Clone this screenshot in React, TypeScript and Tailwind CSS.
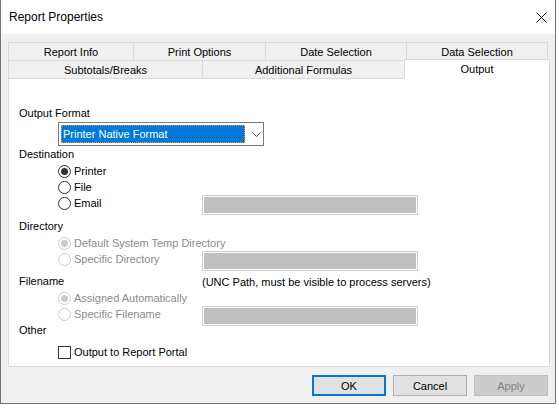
import React from 'react';

// Tab captions, two rows as the dialog lays them out
const backTabs = [
  { label: 'Report Info', w: 'w-[125px]' },
  { label: 'Print Options', w: 'w-[132px]' },
  { label: 'Date Selection', w: 'w-[141px]' },
  { label: 'Data Selection', w: 'w-[142px]' },
];

const Radio = ({ checked = false, disabled = false }: { checked?: boolean; disabled?: boolean }) => (
  <span
    className={
      'flex h-[13px] w-[13px] shrink-0 items-center justify-center rounded-full border bg-white ' +
      (disabled ? 'border-[#cccccc]' : 'border-[#333333]')
    }
  >
    {checked && (
      <span className={'h-[7px] w-[7px] rounded-full ' + (disabled ? 'bg-[#cccccc]' : 'bg-[#333333]')} />
    )}
  </span>
);

const RadioRow = ({ label, checked, disabled }: { label: string; checked?: boolean; disabled?: boolean }) => (
  <div className="flex h-[16px] w-[144px] shrink-0 items-center gap-[3px] whitespace-nowrap">
    <Radio checked={checked} disabled={disabled} />
    <span className={disabled ? 'text-[#8a8a8a]' : 'text-black'}>{label}</span>
  </div>
);

const GreyBox = () => (
  <div className="h-[20px] w-[216px] border border-[#cfcfcf] bg-white p-px">
    <div className="h-full w-full bg-[#bfbfbf]" />
  </div>
);

const App = () => {
  return (
    <div className="h-[410px] w-[559px] overflow-hidden bg-white font-['Liberation_Sans',Arial,sans-serif] text-[11px] leading-[16px] text-black">
      <div className="flex h-[404px] w-[556px] flex-col border-x border-b border-[#737373]">
        {/* title bar */}
        <div className="flex h-[34px] shrink-0 items-center justify-between bg-white pl-[8px] pr-[8px]">
          <span className="text-[12px]">Report Properties</span>
          <svg width="11" height="11" viewBox="0 0 11 11">
            <path d="M0.5 0.5 L10.5 10.5 M10.5 0.5 L0.5 10.5" stroke="#111" strokeWidth="1" />
          </svg>
        </div>

        <div className="flex flex-1 flex-col bg-[#f0f0f0] pl-[7px] pr-[5px] pt-[8px]">
          {/* tab headers */}
          <div className="flex h-[18px]">
            {backTabs.map((t, i) => (
              <div
                key={t.label}
                className={
                  t.w +
                  ' flex items-center justify-center border-l border-t border-[#d9d9d9] ' +
                  (i === backTabs.length - 1 ? 'border-r' : '')
                }
              >
                {t.label}
              </div>
            ))}
          </div>
          <div className="flex h-[18px]">
            <div className="flex w-[194px] items-center justify-center border-l border-t border-[#d9d9d9]">
              Subtotals/Breaks
            </div>
            <div className="flex w-[202px] items-center justify-center border-l border-t border-[#d9d9d9]">
              Additional Formulas
            </div>
            <div className="relative z-10 -mt-px flex h-[20px] w-[146px] items-start justify-center border-x border-t border-[#d9d9d9] bg-white pt-[1px]">
              Output
            </div>
          </div>

          {/* tab page */}
          <div className="h-[289px] w-[542px] border border-[#d9d9d9] bg-white pl-[10px] pt-[26px]">
            <div className="h-[16px]">Output Format</div>
            <div className="ml-[39px] mt-px flex h-[24px] w-[206px] items-center border border-[#7a7a7a] bg-white pl-[2px]">
              <div className="flex h-[18px] w-[184px] items-center border border-dotted border-[#f0a030] bg-[#0078d7] pl-[1px] text-white">
                Printer Native Format
              </div>
              <svg width="9" height="5" viewBox="0 0 9 5" className="ml-[7px]">
                <path d="M0.5 0.5 L4.5 4.5 L8.5 0.5" fill="none" stroke="#555" strokeWidth="1" />
              </svg>
            </div>

            <div className="h-[16px]">Destination</div>
            <div className="ml-[39px] mt-px flex flex-col">
              <RadioRow label="Printer" checked />
              <RadioRow label="File" />
              <div className="flex">
                <RadioRow label="Email" />
                <GreyBox />
              </div>
            </div>

            <div className="mt-[3px] h-[16px]">Directory</div>
            <div className="ml-[39px] mt-px flex flex-col">
              <RadioRow label="Default System Temp Directory" checked disabled />
              <div className="flex">
                <RadioRow label="Specific Directory" disabled />
                <GreyBox />
              </div>
            </div>

            <div className="mt-[2px] flex h-[16px] whitespace-nowrap">
              <span className="w-[183px]">Filename</span>
              <span className="mt-px">(UNC Path, must be visible to process servers)</span>
            </div>
            <div className="ml-[39px] mt-px flex flex-col">
              <RadioRow label="Assigned Automatically" checked disabled />
              <div className="flex">
                <RadioRow label="Specific Filename" disabled />
                <GreyBox />
              </div>
            </div>

            <div className="-mt-[4px] h-[16px]">Other</div>
            <div className="ml-[39px] mt-[6px] flex h-[16px] items-center gap-[3px]">
              <span className="h-[13px] w-[13px] border border-[#333333] bg-white" />
              <span>Output to Report Portal</span>
            </div>
          </div>

          {/* dialog buttons */}
          <div className="mt-[8px] flex justify-end gap-[7px] pr-[2px]">
            <button className="h-[21px] w-[74px] border-2 border-[#0078d7] bg-[#e1e1e1] leading-[16px]">OK</button>
            <button className="h-[21px] w-[74px] border border-[#adadad] bg-[#e1e1e1] leading-[16px]">Cancel</button>
            <button className="h-[21px] w-[74px] border border-[#bfbfbf] bg-[#cccccc] leading-[16px] text-[#838383]">
              Apply
            </button>
          </div>
        </div>
      </div>
    </div>
  );
};

export default App;
